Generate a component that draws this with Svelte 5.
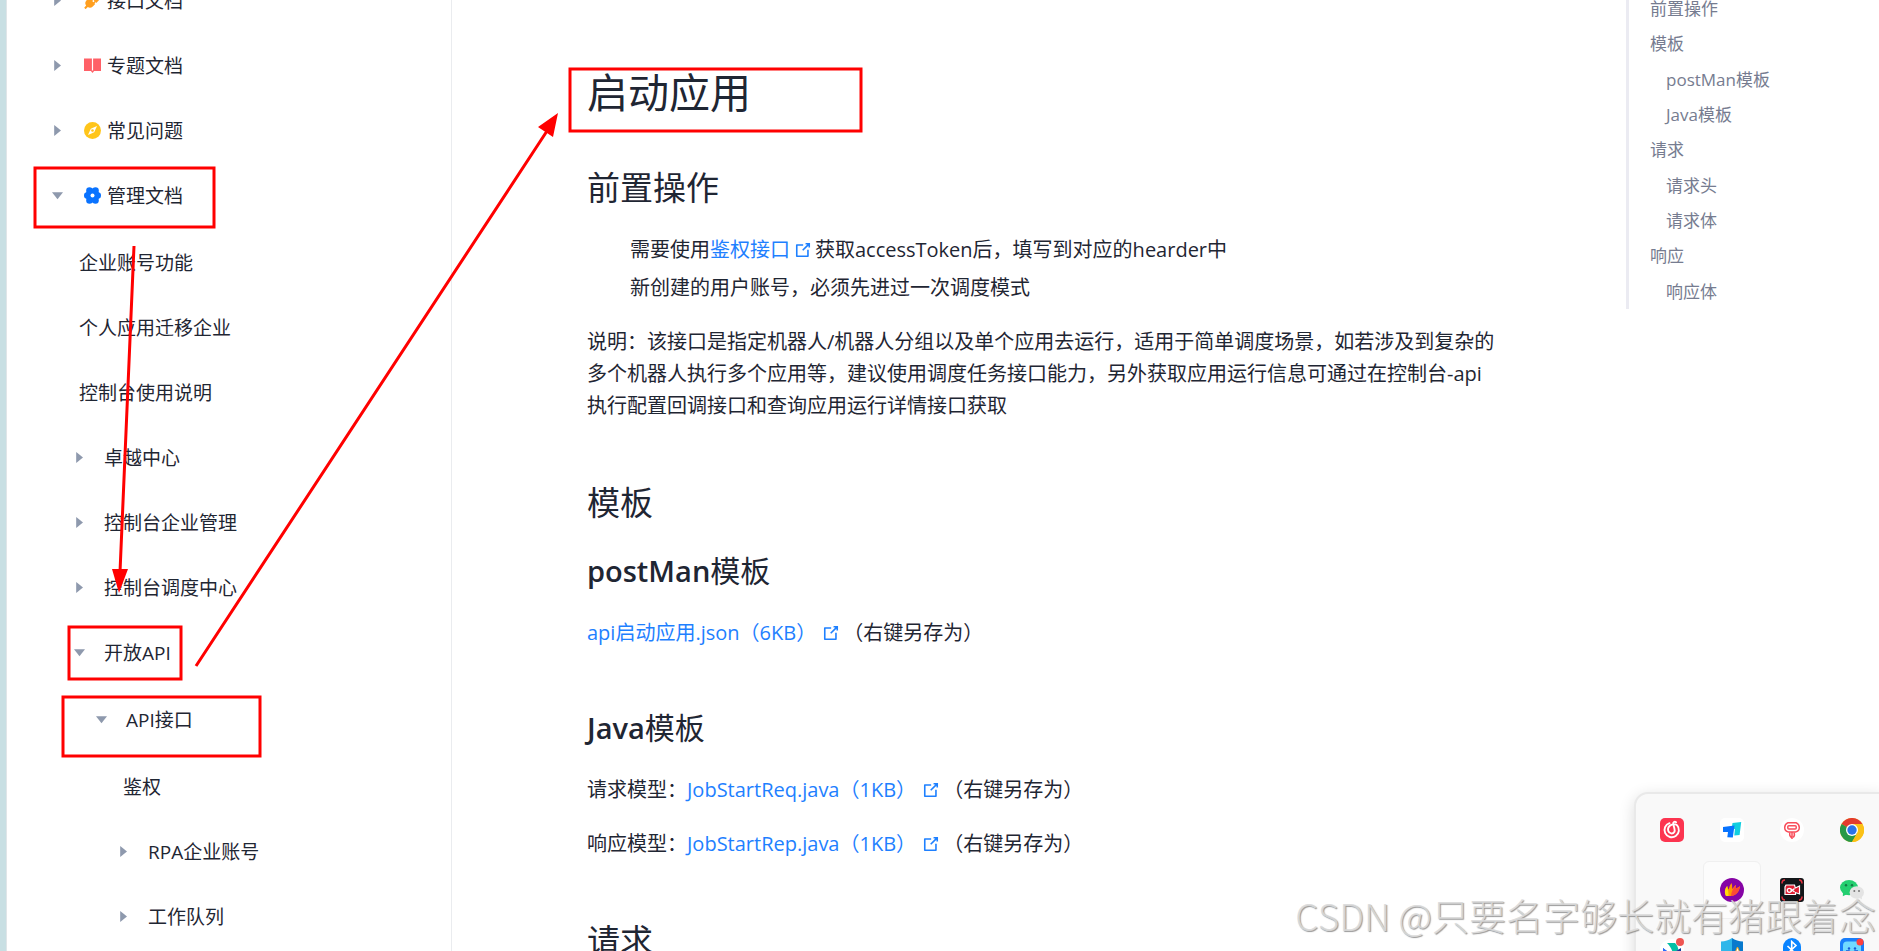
<script>
  const nav = [
    { label: '接口文档', icon: 'plug', children: [] },
    { label: '专题文档', icon: 'book', children: [] },
    { label: '常见问题', icon: 'compass', children: [] },
    {
      label: '管理文档',
      icon: 'gear',
      open: true,
      children: [
        { label: '企业账号功能' },
        { label: '个人应用迁移企业' },
        { label: '控制台使用说明' },
        { label: '卓越中心', children: [] },
        { label: '控制台企业管理', children: [] },
        { label: '控制台调度中心', children: [] },
        {
          label: '开放API',
          open: true,
          children: [
            {
              label: 'API接口',
              open: true,
              children: [
                { label: '鉴权' },
                { label: 'RPA企业账号', children: [] },
                { label: '工作队列', children: [] }
              ]
            }
          ]
        }
      ]
    }
  ];

  const toc = [
    { label: '前置操作' },
    { label: '模板', children: ['postMan模板', 'Java模板'] },
    { label: '请求', children: ['请求头', '请求体'] },
    { label: '响应', children: ['响应体'] }
  ];

  const tray = ['网易云音乐', 'ToDesk', '向日葵', 'Chrome', '', '闪电', '录屏', '微信', '飞书', '安全中心', '蓝牙', '助手'];
</script>

{#snippet external()}
  <svg class="ext" viewBox="0 0 100 100" aria-hidden="true">
    <path d="M18.8 85.1h56c2.2 0 4-1.8 4-4v-32h-8v28h-48v-48h28v-8h-32c-2.2 0-4 1.8-4 4v56c0 2.200 1.800 4 4 4z" />
    <path d="M45.7 48.700l5.600 5.600 25.900-25.800v8.700h8V14.900H62.800v8h8.700z" />
  </svg>
{/snippet}

{#snippet navIcon(name)}
  <svg class="nav-icon" viewBox="0 0 17 17" aria-hidden="true">
    {#if name === 'plug'}
      <g fill="#ff9f1f">
        <path d="M2.600 8.200 5 5.800l6.200 6.200-2.400 2.400a4.300 4.300 0 0 1-5 .7L1.600 17.200.2 15.800l1.900-2.200a4.300 4.300 0 0 1 .5-5.400z" />
        <path d="M8 6.300 10.300 4a4.300 4.300 0 0 1 4-.9L16 1.400l.9 1-1.600 1.800a4.300 4.300 0 0 1-.8 4.500l-2.300 2.300z" />
        <path d="M6.500 8.700l2-2 1 1-2 2zM8.700 10.900l2-2 1 1-2 2z" />
      </g>
    {:else if name === 'book'}
      <path fill="#ff6067" d="M0 1.500h7.900v12.600H0zM9.100 1.500H17v12.600H9.100z" />
      <path fill="#ff6067" d="M6.500 13.500h4L8.500 16z" />
    {:else if name === 'compass'}
      <circle cx="8.500" cy="8.500" r="8.500" fill="#ffc51a" />
      <path fill="#fff" d="M13 4 10.200 10.200 4 13 6.800 6.800z" />
      <circle cx="8.500" cy="8.500" r="1.300" fill="#ffc51a" />
    {:else}
      <g fill="#0a73ff">
        <circle cx="5.500" cy="3.500" r="3.300" />
        <circle cx="11.500" cy="3.500" r="3.300" />
        <circle cx="13.700" cy="8.500" r="3.300" />
        <circle cx="11.500" cy="13.500" r="3.300" />
        <circle cx="5.500" cy="13.500" r="3.300" />
        <circle cx="3.300" cy="8.500" r="3.300" />
        <circle cx="8.500" cy="8.500" r="7" />
      </g>
      <circle cx="8.500" cy="8.500" r="2" fill="#fff" />
    {/if}
  </svg>
{/snippet}

{#snippet tree(items)}
  <ul class="tree">
    {#each items as item}
      <li>
        {#if item.children}
          <button class="row" aria-expanded={!!item.open}>
            <svg class="caret" viewBox="0 0 11 11" aria-hidden="true">
              <path d={item.open ? 'M0 2.200h11L5.500 9.200z' : 'M2.200 0v11L9 5.500z'} />
            </svg>
            {#if item.icon}{@render navIcon(item.icon)}{/if}
            <span>{item.label}</span>
          </button>
          {#if item.open}{@render tree(item.children)}{/if}
        {:else}
          <a class="row leaf" href="#top"><span>{item.label}</span></a>
        {/if}
      </li>
    {/each}
  </ul>
{/snippet}

{#snippet trayIcon(i)}
  <svg viewBox="0 0 24 24" aria-hidden="true">
    {#if i === 0}
      <rect width="24" height="24" rx="5" fill="#fc3550" />
      <g fill="none" stroke="#fff" stroke-width="1.900" stroke-linecap="round">
        <path d="M9.500 5.200A7.200 7.200 0 1 0 17 7.200c-1.500-1.200-3.600-1.300-5.200-.6-3 1.200-4.200 4-3.500 6.500.8 2.700 4.600 3.200 6 .9 1-1.700.1-3.200-.3-5.100l-.8-3c-.3-1.800 1.300-2.700 2.900-1.700" />
      </g>
    {:else if i === 1}
      <rect width="24" height="24" rx="5" fill="#fff" />
      <path fill="#10cfe0" d="M12.500 5 21.200 4l-1.600 13-5.300.5.600-6.500-3.300.3z" />
      <path fill="#0873ff" d="M3 9l11.500-1.400-1.700 12-5.500-.4.700-5.300L3 14z" />
    {:else if i === 2}
      <circle cx="12" cy="12" r="12" fill="#fff" />
      <g fill="none" stroke="#f84e5b" stroke-width="1.500">
        <path d="M8 4.700h8c2 1 3.300 2.700 3.300 4.800 0 2.200-1.500 4-3.800 4.500h-7c-2.300-.5-3.800-2.300-3.800-4.500 0-2.100 1.300-3.800 3.300-4.800z" />
        <rect x="7.800" y="7.800" width="8.400" height="3.200" rx="1" />
        <path d="M10 14.500c-.8 2-.5 3.700 2 5.500M14 14.500c.8 2 .8 3.500-.8 5M12 14v7" />
      </g>
    {:else if i === 3}
      <circle cx="12" cy="12" r="12" fill="#fbc116" />
      <path fill="#e33b2e" d="M12 12 1.600 6A12 12 0 0 1 22.400 6z" />
      <path fill="#279847" d="M12 12 1.600 6A12 12 0 0 0 12 24l5.200-9z" />
      <path fill="#fbc116" d="M12 6h10.400A12 12 0 0 1 12 24l5.200-9z" />
      <circle cx="12" cy="12" r="6" fill="#fff" />
      <circle cx="12" cy="12" r="4.700" fill="#2a73e8" />
    {:else if i === 5}
      <circle cx="12" cy="12" r="12" fill="#8604a5" />
      <path fill="#ff9a00" d="M6 18C4 14 5 10.500 7.200 8c.4 1.600.6 2.400 1.400 3.600C9.500 9 9.800 7 11.500 5c.8 2 .7 3.500.7 6C13.500 9.500 14.500 8 16 7v3.500c1.200-.4 2.500-1.100 4-2.500-.4 5-3.500 9.500-9.500 10z" />
      <path fill="#fc4a35" d="M11 18c.3-4 2-8 5-11v3.500c1.200-.4 2.500-1.100 4-2.500-.4 5-3.500 9.500-9 10z" />
      <path fill="#ffdb0b" d="M6 18C4 14 5 10.500 7.200 8c.4 2.700 1.400 5 1.300 10z" />
    {:else if i === 6}
      <rect width="24" height="24" rx="3" fill="#131619" />
      <path fill="none" stroke="#e83340" stroke-width="1.500" d="M2 5.500C2 3.500 3 2 5 2M22 5.500C22 3.500 21 2 19 2M2 18.500C2 20.500 3 22 5 22M22 18.500c0 2-1 3.500-3 3.500" />
      <path fill="#e01e32" stroke="#fff" stroke-width="1.200" d="M6 7h8.500l.8 3 4.200-2v8l-4-1.500v2H5V9z" />
      <g fill="none" stroke="#fff" stroke-width="1.300"><circle cx="9.300" cy="12.300" r="2" /><path d="m11 11 3.500 3M11 13.500l3.500-3" /></g>
    {:else if i === 7}
      <ellipse cx="9" cy="9.600" rx="9" ry="7.700" fill="#24cf70" />
      <path fill="#24cf70" d="m3 14.500-.2 3.700 4-2z" />
      <ellipse cx="16.800" cy="14.500" rx="7.200" ry="6.200" fill="#e4e4e4" />
      <path fill="#e4e4e4" d="m19 19.500 3 2-.3-3.500z" />
      <g fill="#147a45"><circle cx="6" cy="7.300" r="1.200" /><circle cx="12" cy="7.300" r="1.200" /></g>
      <g fill="#777"><circle cx="14.300" cy="13" r="1" /><circle cx="19" cy="13" r="1" /></g>
    {:else if i === 8}
      <circle cx="12" cy="14" r="13" fill="#fff" />
      <path fill="#05bfa5" d="M7 5h8c2 2 3 4 3.300 6.500L13 16C12 11 10 8 7 5z" />
      <path fill="#143c9c" d="M3 10c4 4 9 6 13 3l5-3v14H3z" />
      <path fill="#286cff" d="M3 10l8 6-2 8H3z" />
      <circle cx="20" cy="4" r="4" fill="#ef5552" />
    {:else if i === 9}
      <path fill="#30b7ea" d="M1 3.500C5 3.500 9 2 12 0v24C6 22 1 18 1 12z" />
      <path fill="#0879cd" d="M23 3.500C19 3.500 15 2 12 0v24c6-2 11-6 11-12z" />
      <path fill="#fff" stroke="#f3a81b" d="m17.500 9 5 12h-10z" />
    {:else if i === 10}
      <rect x="3" width="18" height="24" rx="9" fill="#0a84ff" />
      <path fill="none" stroke="#fff" stroke-width="1.600" d="m7.500 8 8.500 8-4.300 4V3.500L16 7.500l-8.500 8" />
    {:else if i === 11}
      <rect width="24" height="24" rx="5" fill="#187dfa" />
      <rect x="3" y="3.500" width="18" height="18" rx="4" fill="#70d9ff" />
      <g fill="#1458d6"><circle cx="9" cy="10.500" r="1.200" /><circle cx="15" cy="10.500" r="1.200" /></g>
      <path fill="none" stroke="#1458d6" stroke-width="1.500" d="M6 13h3l3 2 3-2h3" />
      <circle cx="20" cy="4" r="3.500" fill="#ff3f3d" />
    {/if}
  </svg>
{/snippet}

<div class="page" id="top">
  <nav class="sidebar" aria-label="文档目录">{@render tree(nav)}</nav>

  <main>
    <article>
      <h1>启动应用</h1>
      <h2>前置操作</h2>
      <ul class="notes">
        <li>需要使用<a href="#top">鉴权接口{@render external()}</a>获取accessToken后，填写到对应的hearder中</li>
        <li>新创建的用户账号，必须先进过一次调度模式</li>
      </ul>
      <p>说明：该接口是指定机器人/机器人分组以及单个应用去运行，适用于简单调度场景，如若涉及到复杂的多个机器人执行多个应用等，建议使用调度任务接口能力，另外获取应用运行信息可通过在控制台-api执行配置回调接口和查询应用运行详情接口获取</p>
      <h2>模板</h2>
      <h3><b>postMan</b>模板</h3>
      <p><a href="#top">api启动应用.json（6KB） {@render external()}</a>（右键另存为）</p>
      <h3><b>Java</b>模板</h3>
      <p>请求模型：<a href="#top">JobStartReq.java（1KB） {@render external()}</a>（右键另存为）</p>
      <p>响应模型：<a href="#top">JobStartRep.java（1KB） {@render external()}</a>（右键另存为）</p>
      <h2>请求</h2>
    </article>
  </main>

  <aside>
    <ul class="toc">
      {#each toc as item}
        <li>
          <a href="#top">{item.label}</a>
          {#if item.children}
            <ul>
              {#each item.children as child}<li><a href="#top">{child}</a></li>{/each}
            </ul>
          {/if}
        </li>
      {/each}
    </ul>
  </aside>

  <div class="tray">
    {#each tray as name, i}
      {#if name}
        <button class:active={i === 5} aria-label={name}>{@render trayIcon(i)}</button>
      {:else}
        <span></span>
      {/if}
    {/each}
  </div>

  <svg class="marks" aria-hidden="true">
    <g fill="none" stroke="#f00" stroke-width="3">
      <rect x="35" y="168" width="179" height="59" />
      <rect x="69" y="627" width="112" height="52" />
      <rect x="63" y="697" width="197" height="59" />
      <rect x="570" y="69" width="291" height="62" />
      <path d="M134 246 120 572M196 666 547 131" />
    </g>
    <path fill="#f00" d="M112 569h16l-9 24zM558 113l-20 14 15 10z" />
  </svg>

  <div class="watermark">CSDN @只要名字够长就有猪跟着念</div>
</div>

<style>
  :global(body) {
    margin: 0;
    background: #fff;
  }
  .page {
    position: relative;
    display: flex;
    height: 100vh;
    box-sizing: border-box;
    overflow: hidden;
    border-left: 6px solid #c8dfe3;
    color: #1f2633;
    font-family: 'Open Sans', 'Noto Sans CJK SC', sans-serif;
    font-size: 20px;
  }
  ul {
    list-style: none;
    margin: 0;
    padding: 0;
  }
  a {
    color: #1e80ff;
    text-decoration: none;
  }
  button {
    border: 0;
    background: none;
    padding: 0;
    font: inherit;
    color: inherit;
  }

  .sidebar {
    flex: 0 0 445px;
    box-shadow: inset 1px 0 #dfe5e8;
    border-right: 1px solid #eaecef;
    font-size: 19px;
  }
  .sidebar > .tree {
    margin-top: -32px;
    padding-left: 46px;
  }
  .tree .tree {
    padding: 2px 0 0 22px;
  }
  .row {
    display: flex;
    align-items: center;
    height: 65px;
    color: inherit;
    white-space: nowrap;
  }
  .row span {
    padding-bottom: 2px;
  }
  .leaf {
    padding-left: 5px;
  }
  .caret {
    width: 11px;
    height: 11px;
    margin-right: 19px;
    fill: #8e99ad;
  }
  .nav-icon {
    width: 17px;
    height: 17px;
    margin: 0 6px 0 2px;
  }

  main {
    flex: 1;
    min-width: 0;
    padding: 66px 24px 0 135px;
  }
  article {
    max-width: 912px;
  }
  h1,
  h2,
  h3,
  p {
    margin: 0;
    font-weight: 400;
  }
  h1 {
    font-size: 41px;
    line-height: 52px;
    margin-bottom: 48px;
  }
  h2 {
    font-size: 33px;
    line-height: 44px;
  }
  h3 {
    font-size: 30px;
    line-height: 40px;
    margin-top: 26px;
  }
  h3 b {
    font-weight: 600;
    font-size: 29px;
  }
  p {
    line-height: 32px;
    margin-top: 22px;
  }
  h3 + p {
    margin-top: 26px;
  }
  p + h2,
  p + h3 {
    margin-top: 59px;
  }
  .notes {
    margin-top: 21px;
    padding-left: 43px;
    line-height: 38px;
  }
  .notes + p {
    margin-top: 19px;
  }
  .ext {
    width: 20px;
    height: 20px;
    margin-right: 2px;
    vertical-align: -3px;
    fill: currentColor;
  }
  .notes .ext {
    margin-left: 3px;
  }

  aside {
    flex: 0 0 253px;
    font-size: 17px;
    line-height: 35px;
  }
  .toc {
    margin-top: -9px;
    padding-left: 21px;
    border-left: 3px solid #ebebf2;
  }
  .toc ul {
    padding: 1px 0 0 16px;
  }
  .toc a {
    display: block;
    color: #767c90;
  }

  .tray {
    position: absolute;
    right: -4px;
    top: calc(100% - 159px);
    display: grid;
    grid-template-columns: repeat(4, 58px);
    grid-auto-rows: 58px;
    gap: 2px;
    padding: 7px 0 0 7px;
    border: 2px solid #e9e9e9;
    border-radius: 14px 0 0 0;
    background: #f9f9f9;
    box-shadow: 0 4px 16px rgba(0, 0, 0, 0.14);
  }
  .tray button {
    display: grid;
    place-items: center;
    box-sizing: border-box;
    border-radius: 6px;
  }
  .tray .active {
    background: #fcfcfc;
    border: 1px solid #f0f0f0;
  }
  .tray svg {
    width: 24px;
    height: 24px;
  }

  .marks {
    position: absolute;
    top: 0;
    left: -6px;
    width: calc(100% + 6px);
    height: 100%;
    pointer-events: none;
  }
  .watermark {
    position: absolute;
    right: 3px;
    bottom: 8px;
    font-family: 'Noto Sans CJK SC', sans-serif;
    font-size: 37px;
    font-weight: 300;
    line-height: 56px;
    white-space: nowrap;
    color: rgba(218, 218, 218, 0.9);
    text-shadow: 1px 1px 1px rgba(110, 110, 110, 0.7);
    pointer-events: none;
  }
</style>
